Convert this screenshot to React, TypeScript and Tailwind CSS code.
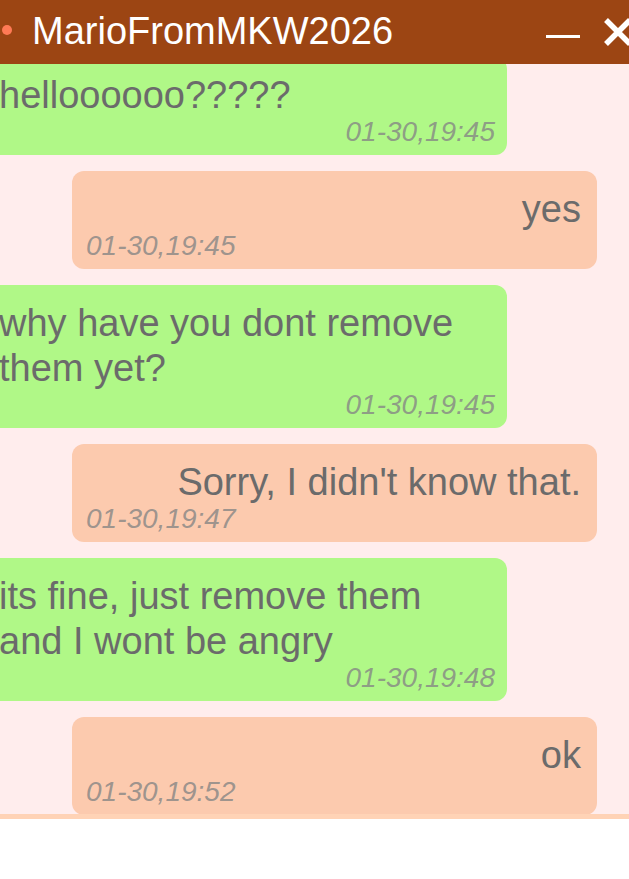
import React from "react";

type Message = {
  id: number;
  mine: boolean;
  text: string;
  time: string;
};

const messages: Message[] = [
  { id: 1, mine: false, text: "helloooooo?????", time: "01-30,19:45" },
  { id: 2, mine: true, text: "yes", time: "01-30,19:45" },
  { id: 3, mine: false, text: "why have you dont remove them yet?", time: "01-30,19:45" },
  { id: 4, mine: true, text: "Sorry, I didn't know that.", time: "01-30,19:47" },
  { id: 5, mine: false, text: "its fine, just remove them and I wont be angry", time: "01-30,19:48" },
  { id: 6, mine: true, text: "ok", time: "01-30,19:52" },
];

function Bubble({ message, first }: { message: Message; first: boolean }) {
  if (message.mine) {
    return (
      <div
        className={`ml-auto mr-[32px] w-[525px] shrink-0 rounded-[12px] bg-[#fccaae] pl-[14px] pr-[16px] pt-[16px] pb-[9px] ${first ? "-mt-[7px]" : ""}`}
      >
        <p className="text-right text-[38px] leading-[45px] text-[#6b6b6b]">{message.text}</p>
        <p className="text-left text-[28px] italic leading-[28px] text-[#858585]/80">{message.time}</p>
      </div>
    );
  }
  return (
    <div
      className={`-ml-[17px] w-[524px] shrink-0 rounded-[12px] bg-[#b0f887] pl-[16px] pr-[12px] pt-[16px] pb-[9px] ${first ? "-mt-[7px]" : ""}`}
    >
      <p className="text-left text-[38px] leading-[45px] text-[#6b6b6b]">{message.text}</p>
      <p className="text-right text-[28px] italic leading-[28px] text-[#858585]/80">{message.time}</p>
    </div>
  );
}

export default function App() {
  return (
    <div className="h-[879px] w-full overflow-hidden bg-white font-['Liberation_Sans',Arial,sans-serif]">
      <header className="relative z-10 flex h-16 items-center overflow-hidden bg-[#9c4513]">
        <span className="-mt-1 ml-[2px] h-[10px] w-[10px] shrink-0 rounded-full bg-[#ff7a55]" />
        <h1 className="-mt-[3px] ml-[20px] text-[38px] leading-none text-white">MarioFromMKW2026</h1>
        <span className="mt-[9px] ml-auto h-[3px] w-[34px] shrink-0 bg-white" />
        <svg
          className="ml-[23px] -mr-[4px] h-[30px] w-[30px] shrink-0"
          viewBox="0 0 30 30"
          fill="none"
          stroke="white"
          strokeWidth="5.5"
        >
          <path d="M3 3 L27 27 M27 3 L3 27" />
        </svg>
      </header>

      <div className="flex h-[750px] flex-col gap-4 overflow-hidden bg-[#ffeded]">
        {messages.map((m, i) => (
          <Bubble key={m.id} message={m} first={i === 0} />
        ))}
      </div>
      <div className="h-[5px] bg-[#ffd3b6]" />
    </div>
  );
}
